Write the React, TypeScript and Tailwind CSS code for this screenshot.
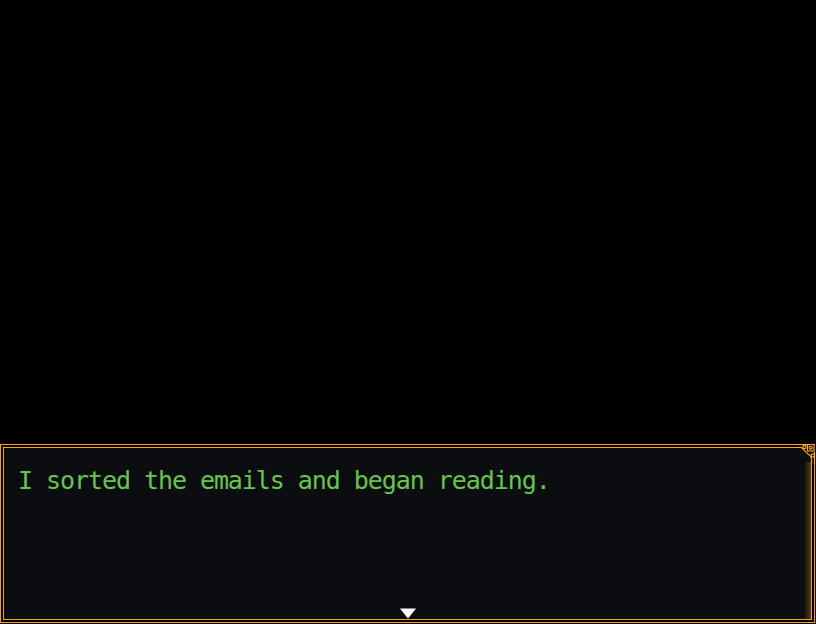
import React from "react";

export default function App() {
  return (
    <div className="w-[816px] h-[624px] bg-black flex flex-col overflow-hidden">
      <div className="h-[444px] shrink-0" />
      <div className="relative w-[815px] h-[179px] border border-[#f7a50d] p-[2px] shrink-0">
        <div className="relative h-full border border-[#f7a50d] bg-[#0c0d10] pl-[14px] pt-[18px] overflow-hidden">
          <div className="absolute right-0 top-[14px] bottom-0 w-[7px] bg-gradient-to-r from-transparent to-[#5c3d0a]" />
          <p
            className="relative text-[25px] leading-[30px] tracking-[-1.06px] text-[#64c848] whitespace-pre"
            style={{ fontFamily: '"DejaVu Sans Mono", monospace' }}
          >
            I sorted the emails and began reading.
          </p>
        </div>
        <svg
          className="absolute left-[398px] top-[163px]"
          width="18"
          height="12"
          viewBox="0 0 18 12"
        >
          <polygon points="1,1.5 17,1.5 9,11.5" fill="#3a2a10" opacity="0.6" />
          <polygon points="1,0.5 17,0.5 9,10.5" fill="#ffffff" />
        </svg>
        <svg
          className="absolute left-[795px] top-[-1px]"
          width="20"
          height="20"
          viewBox="795 444 20 20"
        >
          <polygon points="797,445 815,445 815,463 812,463 812,459 808,455 801,448 797,448" fill="#000000" />
          <polygon points="801,448 808,455 812,459 812,463 811,463 811,460 807,456 800,449 797,449 797,448" fill="#0c0d10" />
          <path d="M795 444.5 H802" stroke="#ffa810" strokeWidth="1.2" fill="none" />
          <path d="M795 447.5 H800.5 L807 454 Q810.5 456 810.5 459.5 V464" stroke="#ffa810" strokeWidth="1.2" fill="none" />
          <circle cx="803.5" cy="447" r="1.6" stroke="#ffa810" strokeWidth="1.2" fill="none" />
          <rect x="806.5" y="444.5" width="6.5" height="6.5" stroke="#ffa810" strokeWidth="1.2" fill="none" />
          <circle cx="809.75" cy="447.75" r="1.4" stroke="#ffa810" strokeWidth="1.2" fill="none" />
          <circle cx="811.8" cy="455.5" r="1.7" stroke="#ffa810" strokeWidth="1.2" fill="none" />
          <path d="M813.5 452 V464" stroke="#ffa810" strokeWidth="1.2" fill="none" />
        </svg>
      </div>
    </div>
  );
}
